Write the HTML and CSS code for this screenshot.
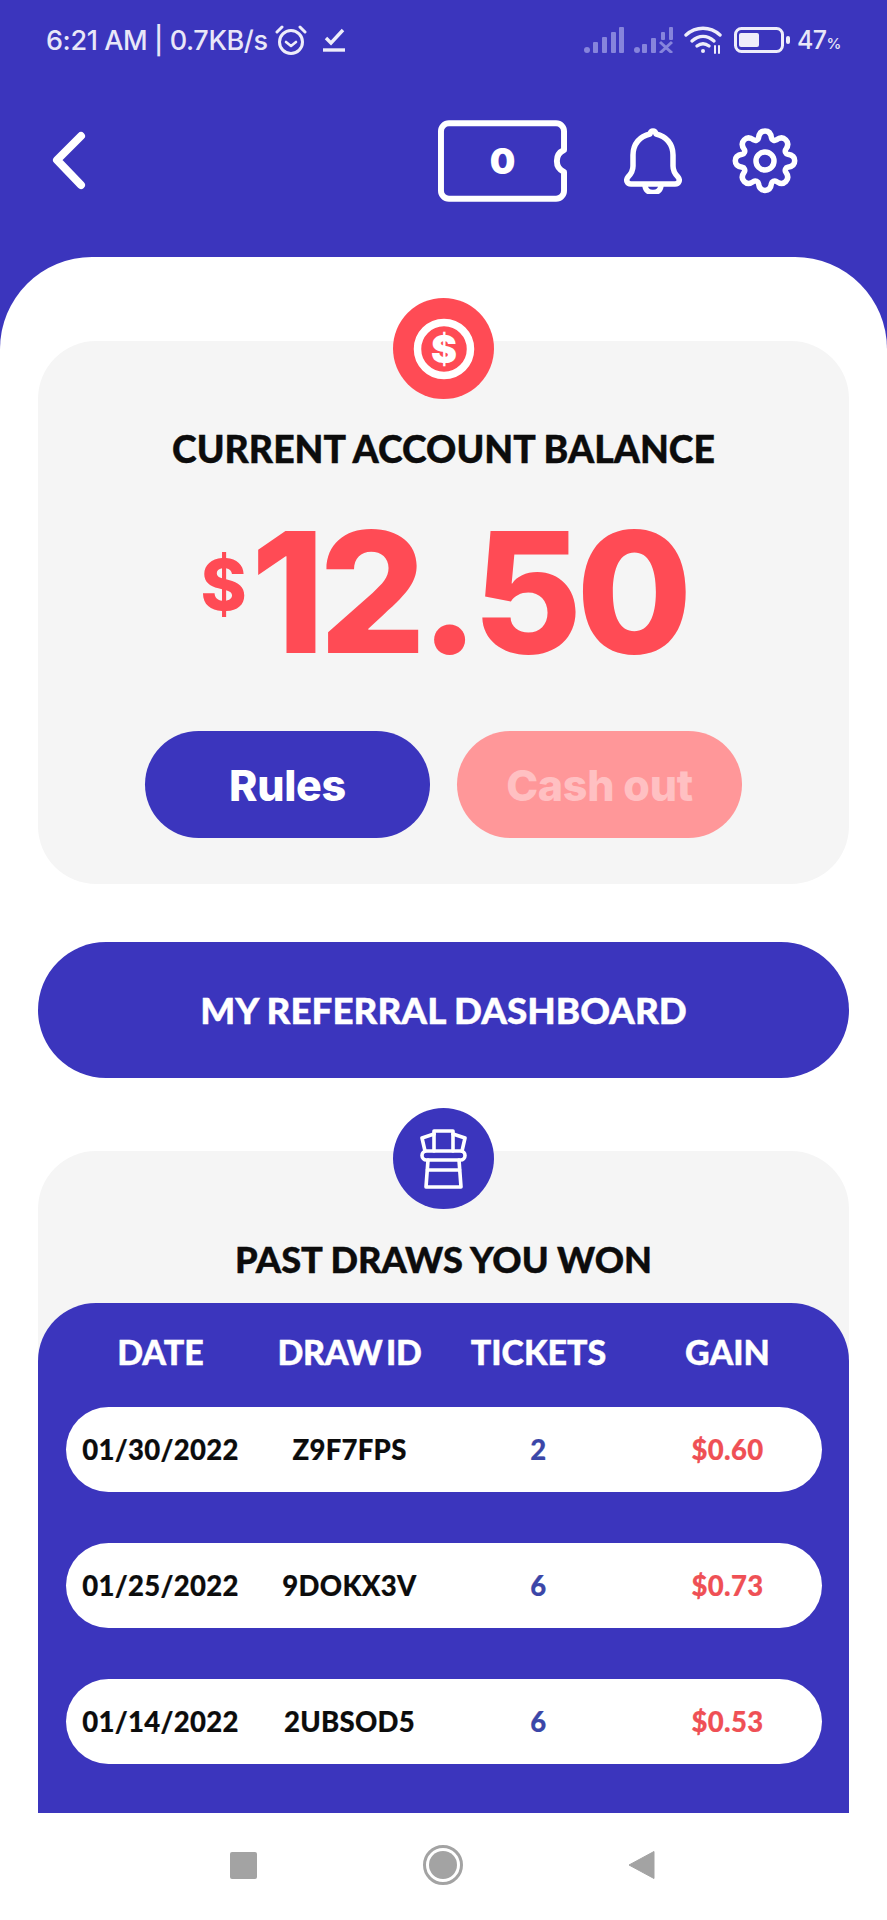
FILE: index.html
```html
<!DOCTYPE html>
<html lang="en">
<head>
<meta charset="utf-8">
<title>Account balance</title>
<link rel="stylesheet" href="styles.css">
</head>
<body>
<div class="screen">
  <div class="top">
    <div class="status">
      <div class="status-left">
        <span class="status-text">6:21 AM | 0.7KB/s</span>
        <svg class="ic-alarm" viewBox="0 0 32 32" fill="none" stroke="#eeedfa" stroke-width="3" stroke-linecap="round" stroke-linejoin="round"><circle cx="16" cy="18" r="11.5"/><path d="M11 18l5 4 5-4" stroke-width="2.6"/><path d="M2 8l5-5M30 8l-5-5"/></svg>
        <svg class="ic-check" viewBox="0 0 22 24" fill="none" stroke="#eeedfa" stroke-width="3.4"><path d="M3 10l5 5L20 2" stroke-linejoin="miter"/><path d="M0 22h22"/></svg>
      </div>
      <div class="status-right">
        <svg class="ic-signal" viewBox="0 0 40 26" fill="#8684dc"><circle cx="3" cy="23" r="3"/><rect x="9" y="15" width="5" height="11" rx="1"/><rect x="18" y="10" width="5" height="16" rx="1"/><rect x="27" y="5" width="5" height="21" rx="1"/><rect x="35" y="0" width="5" height="26" rx="1"/></svg>
        <svg class="ic-signal" viewBox="0 0 40 26" fill="#8684dc"><circle cx="3" cy="23" r="3"/><rect x="8" y="17" width="5" height="9" rx="1"/><rect x="17" y="11" width="5" height="15" rx="1"/><rect x="27" y="5" width="4" height="8" rx="1"/><rect x="35" y="0" width="4" height="13" rx="1"/><path d="M26 15l12 11M38 15L26 26" stroke="#8684dc" stroke-width="3" fill="none"/></svg>
        <svg class="ic-wifi" viewBox="0 0 38 28" fill="none" stroke="#eeedfa" stroke-width="3.4" stroke-linecap="round"><path d="M2 9c10-9 24-9 34 0"/><path d="M8 15c7-6 15-6 22 0"/><path d="M13 20c4-3 8-3 12 0"/><circle cx="19" cy="25" r="2" fill="#eeedfa" stroke="none"/><path d="M31 20v7M35 20v7" stroke-width="2"/></svg>
        <svg class="ic-battery" viewBox="0 0 56 26" fill="none"><rect x="1.5" y="1.5" width="47" height="23" rx="6" stroke="#eeedfa" stroke-width="3"/><rect x="5" y="6" width="20" height="14" rx="2" fill="#eeedfa"/><rect x="52" y="9" width="4" height="8" rx="2" fill="#eeedfa"/></svg>
        <span class="status-text status-pct">47<small class="pct">%</small></span>
      </div>
    </div>
    <header class="header">
      <svg class="ic-back" viewBox="0 0 36 60" fill="none" stroke="#fff" stroke-width="8" stroke-linecap="round" stroke-linejoin="round"><path d="M30 5L6 29l24 25"/></svg>
      <div class="ticket">
        <svg class="ticket-shape" viewBox="0 0 130 82" fill="none" stroke="#fff" stroke-width="6" stroke-linejoin="round"><path d="M11 3h108a8 8 0 0 1 8 8v19a12 12 0 0 0 0 22v19a8 8 0 0 1-8 8H11a8 8 0 0 1-8-8V11a8 8 0 0 1 8-8z"/></svg>
        <span class="ticket-num">0</span>
      </div>
      <svg class="ic-bell" viewBox="0 0 58 66" fill="none" stroke="#fff" stroke-width="5.5" stroke-linejoin="round" stroke-linecap="round"><path d="M29 3c-1.500 0-2.500 1-3 3C16 8 9 16 9 27v11c0 5-2 8-5 11-2.500 3-1 7 3 7h44c4 0 5.500-4 3-7-3-3-5-6-5-11V27c0-11-7-19-17-21-.5-2-1.500-3-3-3z"/><path d="M21 57c0 5 3.500 7.500 8 7.500s8-2.500 8-7.500"/></svg>
      <svg class="ic-gear" viewBox="0 0 66 66" fill="none" stroke="#fff" stroke-width="5.500" stroke-linejoin="round"><path d="M33 3c4 0 6 3 6.500 7 .3 2 3 3 4.700 2 3.300-2.400 6.800-2.900 9.600-.1 2.800 2.800 2.300 6.300-.1 9.600-1.100 1.700 0 4.400 2 4.700 4 .5 7 2.500 7 6.500s-3 6-7 6.500c-2 .3-3.100 3-2 4.700 2.400 3.300 2.900 6.800.1 9.600-2.800 2.800-6.300 2.300-9.600-.1-1.700-1.100-4.400 0-4.700 2-.5 4-2.500 7-6.500 7s-6-3-6.500-7c-.3-2-3-3.100-4.700-2-3.300 2.400-6.800 2.900-9.600.1-2.800-2.800-2.300-6.300.1-9.600 1.100-1.700 0-4.400-2-4.700-4-.5-7-2.500-7-6.500s3-6 7-6.500c2-.3 3.100-3 2-4.700-2.400-3.300-2.900-6.800-.1-9.600 2.800-2.800 6.300-2.300 9.600.1 1.700 1 4.400 0 4.700-2 .5-4 2.500-7 6.500-7z"/><circle cx="33" cy="33" r="9"/></svg>
    </header>
  </div>

  <main class="sheet">
    <section class="card balance">
      <div class="badge badge-red">
        <svg class="badge-icon" viewBox="0 0 62 62"><circle cx="31" cy="31" r="26.500" fill="none" stroke="#fff" stroke-width="7.500"/><text class="dollar" x="31" y="45" text-anchor="middle">$</text></svg>
      </div>
      <h2 class="card-title">CURRENT ACCOUNT BALANCE</h2>
      <div class="amount"><span class="amount-sign">$</span><span class="amount-num">12.50</span></div>
      <div class="actions">
        <button class="btn btn-blue">Rules</button>
        <button class="btn btn-pink">Cash out</button>
      </div>
    </section>

    <div class="referral">MY REFERRAL DASHBOARD</div>

    <section class="card draws">
      <div class="badge badge-blue">
        <svg class="badge-icon money" viewBox="0 0 47 60" fill="none" stroke="#fff" stroke-width="3.600" stroke-linejoin="round" stroke-linecap="round"><path d="M14 22V2h19v20"/><path d="M14 5L2 9l3 13M33 5l12 4-3 13"/><rect x="2" y="22" width="43" height="9" rx="4.500"/><path d="M8 31L6 58h35l-2-27M7 41h33"/></svg>
      </div>
      <h2 class="card-title draws-title">PAST DRAWS YOU WON</h2>
      <div class="table">
        <div class="thead"><span>DATE</span><span class="th-tight">DRAW ID</span><span>TICKETS</span><span>GAIN</span></div>
        <div class="trow"><span>01/30/2022</span><span>Z9F7FPS</span><span class="tickets">2</span><span class="gain">$0.60</span></div>
        <div class="trow"><span>01/25/2022</span><span>9DOKX3V</span><span class="tickets">6</span><span class="gain">$0.73</span></div>
        <div class="trow"><span>01/14/2022</span><span>2UBSOD5</span><span class="tickets">6</span><span class="gain">$0.53</span></div>
      </div>
    </section>
  </main>

  <nav class="nav">
    <span class="nav-square"></span>
    <span class="nav-home"><span class="nav-dot"></span></span>
    <svg class="nav-back" viewBox="0 0 27 30"><path d="M26 1.500v27L1 15z" fill="#a3a3a3" stroke="#a3a3a3" stroke-linejoin="round"/></svg>
  </nav>
</div>
</body>
</html>
```

FILE: styles.css
```css
* { box-sizing: border-box; }
html, body { margin: 0; padding: 0; }
body { font-family: "Lato", "Liberation Sans", sans-serif; background: #fff; }

.screen { width: 887px; height: 1920px; display: flex; flex-direction: column; overflow: hidden; background: #3b35bd; }
.top { height: 257px; flex: none; }

.status { height: 80px; display: flex; justify-content: space-between; align-items: center; padding: 0 46px 0 46px; }
.status-left, .status-right { display: flex; align-items: center; }
.status-text { font-family: "Inter", "Roboto", sans-serif; font-size: 27px; font-weight: 500; color: #e8e7f8; letter-spacing: -0.4px; white-space: nowrap; }
.status-pct { font-size: 25px; letter-spacing: -0.5px; }
.pct { font-size: 15px; }
.ic-alarm { width: 32px; height: 32px; margin-left: 7px; }
.ic-check { width: 22px; height: 24px; margin-left: 16px; }
.ic-signal { width: 40px; height: 26px; margin-right: 10px; }
.ic-wifi { width: 38px; height: 28px; margin-right: 12px; }
.ic-battery { width: 56px; height: 26px; margin-right: 7px; }

.header { display: flex; align-items: center; height: 82px; margin-top: 40px; padding-left: 51px; }
.ic-back { width: 36px; height: 60px; margin-right: 351px; }
.ticket { position: relative; width: 129px; height: 82px; display: flex; align-items: center; justify-content: center; }
.ticket-shape { position: absolute; inset: 0; width: 129px; height: 82px; }
.ticket-num { font-family: "Inter", sans-serif; font-size: 36px; font-weight: 900; color: #fff; }
.ic-bell { width: 58px; height: 66px; margin-left: 57px; }
.ic-gear { width: 66px; height: 66px; margin-left: 50px; }

.sheet { flex: none; height: 1556px; background: #fff; border-radius: 92px 92px 0 0; padding: 84px 38px 0; overflow: hidden; }

.card { position: relative; background: #f5f5f5; border-radius: 58px; }
.balance { height: 543px; padding-top: 86px; }
.draws { height: 800px; margin-top: 73px; padding-top: 86px; }

.badge { position: absolute; top: -43px; left: 355px; width: 101px; height: 101px; border-radius: 50%; display: flex; align-items: center; justify-content: center; }
.badge-red { background: #ff4b55; }
.badge-blue { background: #3b35bd; }
.badge-icon { width: 62px; height: 62px; }
.badge-icon.money { width: 47px; height: 60px; }
.dollar { font-family: "Inter", sans-serif; font-size: 39px; font-weight: 900; fill: #fff; }

.card-title { margin: 0; font-size: 37.400px; line-height: 44px; font-weight: 900; color: #0c0c0c; text-align: center; -webkit-text-stroke: 0.4px #0c0c0c; }
.draws-title { font-size: 36.200px; }

.amount { display: flex; justify-content: center; align-items: flex-start; margin-top: 26px; height: 234px; color: #ff4b55; font-weight: 800; font-family: "Inter", sans-serif; }
.amount-sign { font-size: 70px; line-height: 80px; margin-top: 48px; margin-right: 4px; }
.amount-num { font-size: 168px; line-height: 190px; letter-spacing: -6px; }

.actions { display: flex; justify-content: center; gap: 27px; }
.btn { width: 285px; height: 107px; border: 0; border-radius: 54px; font-family: "Inter", sans-serif; font-size: 43px; font-weight: 800; letter-spacing: -0.3px; padding: 0; }
.btn-blue { background: #3b35bd; color: #fff; }
.btn-pink { background: #ff9799; color: #ffc0c2; }

.referral { height: 136px; margin-top: 58px; background: #3b35bd; border-radius: 68px; color: #fff; font-size: 36.800px; font-weight: 900; -webkit-text-stroke: 0.4px #fff; display: flex; align-items: center; justify-content: center; }

.table { margin-top: 22px; height: 600px; background: #3b35bd; border-radius: 58px 58px 0 0; padding: 0 27px 0 28px; }
.thead, .trow { display: grid; grid-template-columns: repeat(4, 1fr); align-items: center; text-align: center; }
.thead { height: 104px; padding-bottom: 8px; color: #fff; font-size: 34px; font-weight: 900; -webkit-text-stroke: 0.4px #fff; }
.th-tight { word-spacing: -4px; letter-spacing: -0.3px; }
.trow { height: 85px; margin-bottom: 51px; background: #fff; border-radius: 43px; color: #0c0c0c; font-size: 27.500px; font-weight: 900; letter-spacing: 0.3px; -webkit-text-stroke: 0.2px currentColor; }
.tickets { color: #3b46a8; }
.gain { color: #ef5055; }

.nav { flex: 1; background: #fff; display: flex; align-items: center; padding-left: 230px; padding-bottom: 3px; }
.nav-square { width: 27px; height: 27px; border-radius: 2px; background: #a3a3a3; }
.nav-home { width: 40px; height: 40px; border-radius: 50%; border: 3px solid #a3a3a3; margin-left: 166px; display: flex; align-items: center; justify-content: center; }
.nav-dot { width: 28px; height: 28px; border-radius: 50%; background: #a3a3a3; }
.nav-back { width: 27px; height: 30px; margin-left: 165px; }
```
